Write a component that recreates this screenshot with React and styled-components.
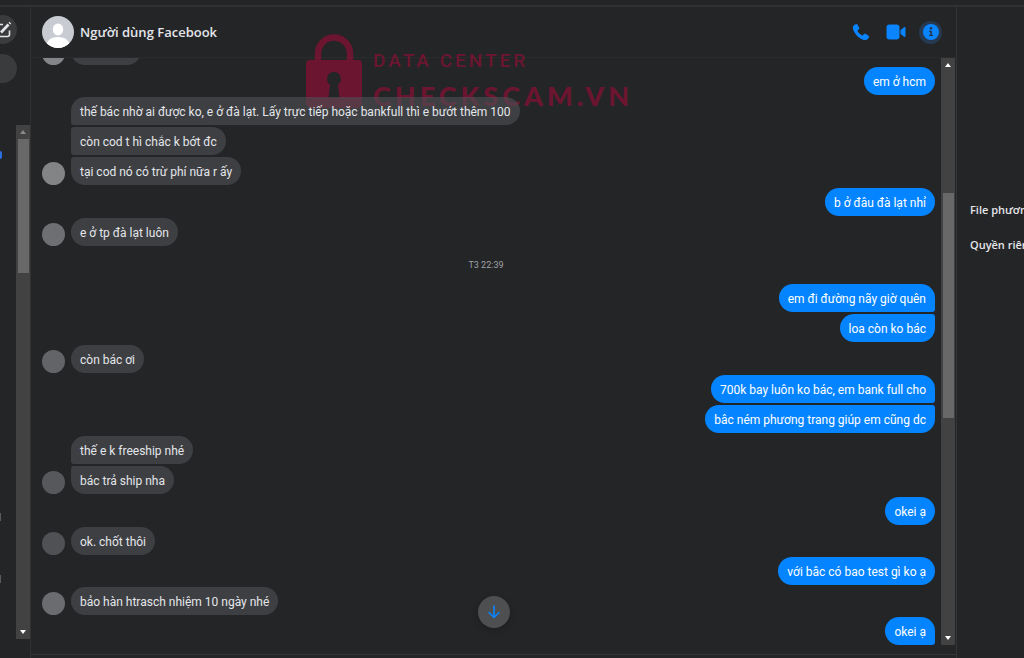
import React from 'react';
import styled, { createGlobalStyle, css } from 'styled-components';

const GlobalStyle = createGlobalStyle`
  * {
    box-sizing: border-box;
  }
  body {
    margin: 0;
    background: #242526;
    color: #e4e6eb;
    font-family: 'Open Sans', 'Noto Sans', sans-serif;
    font-size: 12px;
  }
  button {
    border: 0;
    padding: 0;
    background: none;
    color: inherit;
    font: inherit;
    cursor: pointer;
  }
`;

const Page = styled.div`
  display: flex;
  flex-direction: column;
  height: 100vh;
  overflow: hidden;
`;

const TopStrip = styled.div`
  flex: none;
  height: 7px;
  border-bottom: 2px solid #303132;
`;

const Columns = styled.div`
  display: flex;
  flex: 1;
  min-height: 0;
`;

/* left column */
const Sidebar = styled.aside`
  display: flex;
  flex-direction: column;
  flex: none;
  width: 31px;
  overflow: hidden;
  border-right: 1px solid #303132;
`;

const SidebarTools = styled.div`
  display: flex;
  flex-direction: column;
  align-items: flex-end;
  gap: 10px;
  height: 118px;
  padding: 8px 13px 0 0;
`;

const ComposeButton = styled.button`
  display: flex;
  align-items: center;
  justify-content: center;
  flex: none;
  width: 29px;
  height: 29px;
  border-radius: 50%;
  background: #3a3b3c;
`;

const SearchInput = styled.input`
  flex: none;
  width: 240px;
  height: 29px;
  border: 0;
  border-radius: 15px;
  background: #3a3b3c;
`;

const ThreadArea = styled.div`
  display: flex;
  flex: 1;
  justify-content: flex-end;
  min-height: 0;
  margin-bottom: 19px;
`;

const ThreadList = styled.div`
  display: flex;
  flex: 1;
  flex-direction: column;
  align-items: flex-start;
  padding-top: 26px;
`;

const UnreadDot = styled.span`
  width: 2px;
  height: 8px;
  border-radius: 0 4px 4px 0;
  background: #2d6fe0;
`;

const ThreadMark = styled.span`
  width: 1px;
  height: 8px;
  margin-top: ${({ $gap }) => $gap}px;
  background: #58595b;
`;

/* scroll bars */
const Track = styled.div`
  display: flex;
  flex-direction: column;
  flex: none;
  align-items: center;
  width: 14px;
  background: #424242;
`;

const TrackButton = styled.button`
  display: flex;
  align-items: center;
  justify-content: center;
  flex: none;
  width: 14px;
  height: 14px;
  color: ${({ $muted }) => ($muted ? '#8a8a8a' : '#fff')};
`;

const TrackSpace = styled.div`
  flex: ${({ $share }) => $share} 0 0;
`;

const Thumb = styled.div`
  flex: ${({ $share }) => $share} 0 0;
  width: 11px;
  background: #686868;
`;

/* conversation */
const Chat = styled.main`
  position: relative;
  display: flex;
  flex: 1;
  flex-direction: column;
  min-width: 0;
`;

const ChatHeader = styled.header`
  display: flex;
  align-items: center;
  flex: none;
  height: 51px;
  padding: 0 14px 0 11px;
  border-bottom: 1px solid #2a2b2c;
`;

const Title = styled.h1`
  flex: 1;
  margin: 0 0 0 6px;
  font-size: 13px;
  font-weight: 600;
  line-height: 20px;
`;

const Actions = styled.div`
  display: flex;
  gap: 12px;
`;

const ActionButton = styled.button`
  display: flex;
  align-items: center;
  justify-content: center;
  width: 23px;
  height: 23px;
  border-radius: 50%;
  background: ${({ $active }) => ($active ? '#263951' : 'transparent')};
  color: #0a84ff;
`;

const ChatBody = styled.div`
  display: flex;
  flex: 1;
  min-height: 0;
  padding-right: 1px;
`;

const Messages = styled.div`
  position: relative;
  z-index: 1;
  display: flex;
  flex: 1;
  flex-direction: column;
  justify-content: flex-end;
  gap: 2px;
  min-width: 0;
  overflow: hidden;
  padding: 0 6px 0 11px;
`;

const Group = styled.section`
  display: flex;
  flex: none;
  align-items: flex-end;
  gap: 6px;
  justify-content: ${({ $own }) => ($own ? 'flex-end' : 'flex-start')};
  margin-bottom: ${({ $many }) => ($many ? '1px' : '0')};
`;

const Avatar = styled.span`
  flex: none;
  width: 23px;
  height: 23px;
  border-radius: 50%;
  background: ${({ $tone }) => $tone};
`;

const Stack = styled.div`
  display: flex;
  flex-direction: column;
  align-items: ${({ $own }) => ($own ? 'flex-end' : 'flex-start')};
  gap: 2px;
`;

const ownShape = css`
  background: #0584ff;
  color: #fff;
  border-top-right-radius: ${({ $joinTop }) => ($joinTop ? '3px' : '14px')};
  border-bottom-right-radius: ${({ $joinBottom }) => ($joinBottom ? '3px' : '14px')};
`;

const otherShape = css`
  background: rgba(79, 82, 85, 0.6);
  border-top-left-radius: ${({ $joinTop }) => ($joinTop ? '3px' : '14px')};
  border-bottom-left-radius: ${({ $joinBottom }) => ($joinBottom ? '3px' : '14px')};
`;

const Bubble = styled.p`
  margin: 0;
  min-width: ${({ $min }) => $min || 0}px;
  height: 28px;
  padding: 1px 9px 0;
  border-radius: 14px;
  font-family: Roboto, 'Noto Sans', sans-serif;
  line-height: 28px;
  white-space: nowrap;
  ${({ $own }) => ($own ? ownShape : otherShape)}
`;

const Time = styled.time`
  flex: none;
  height: 34px;
  padding-right: 5px;
  color: #a0a3a8;
  font-family: Roboto, 'Noto Sans', sans-serif;
  font-size: 9px;
  line-height: 34px;
  text-align: center;
`;

const ScrollDown = styled.button`
  position: absolute;
  z-index: 2;
  bottom: 30px;
  left: 50%;
  display: flex;
  align-items: center;
  justify-content: center;
  width: 32px;
  height: 32px;
  margin-left: -16px;
  border-radius: 50%;
  background: #4e4f50;
  box-shadow: 0 2px 6px rgba(0, 0, 0, 0.2);
  color: #0a84ff;
`;

const ChatFooter = styled.footer`
  flex: none;
  height: 13px;
  padding-top: 9px;

  &::before {
    content: '';
    display: block;
    border-top: 1px solid #343536;
  }
`;

/* right column */
const Details = styled.aside`
  display: flex;
  flex-direction: column;
  flex: none;
  align-items: flex-start;
  gap: 15px;
  width: 68px;
  overflow: hidden;
  padding: 193px 0 0 13px;
  border-left: 1px solid #343536;
`;

const DetailsButton = styled.button`
  flex: none;
  font-size: 11px;
  font-weight: 600;
  line-height: 20px;
  white-space: nowrap;
`;

/* stamp behind the messages */
const Stamp = styled.div`
  position: absolute;
  top: 26px;
  left: 275px;
  display: flex;
  gap: 11px;
  opacity: 0.6;
  color: #9c0c38;
  pointer-events: none;
`;

const StampText = styled.div`
  padding-top: 15px;
  font-family: Lato, sans-serif;
  white-space: nowrap;
`;

const StampSmall = styled.div`
  font-family: Roboto, sans-serif;
  font-size: 19px;
  font-weight: 500;
  letter-spacing: 3px;
  line-height: 26px;
`;

const StampLarge = styled.div`
  font-size: 27px;
  font-weight: 900;
  letter-spacing: 4px;
  line-height: 44px;
`;

const conversation = [
  { tone: '#848588', messages: [''] },
  { own: true, messages: ['em ở hcm'] },
  {
    tone: '#838486',
    messages: [
      'thế bác nhờ ai được ko, e ở đà lạt. Lấy trực tiếp hoặc bankfull thì e bướt thêm 100',
      'còn cod t hì chắc k bớt đc',
      'tại cod nó có trừ phí nữa r ấy',
    ],
  },
  { own: true, messages: ['b ở đâu đà lạt nhỉ'] },
  { tone: '#6e6f72', messages: ['e ở tp đà lạt luôn'] },
  { time: 'T3 22:39' },
  { own: true, messages: ['em đi đường nãy giờ quên', 'loa còn ko bác'] },
  { tone: '#636467', messages: ['còn bác ơi'] },
  { own: true, messages: ['700k bay luôn ko bác, em bank full cho', 'bâc ném phương trang giúp em cũng dc'] },
  { tone: '#57585b', messages: ['thế e k freeship nhé', 'bác trả ship nha'] },
  { own: true, messages: ['okei ạ'] },
  { tone: '#505154', messages: ['ok. chốt thôi'] },
  { own: true, messages: ['với bâc có bao test gì ko ạ'] },
  { tone: '#6b6c6f', messages: ['bảo hàn htrasch nhiệm 10 ngày nhé'] },
  { own: true, continues: true, messages: ['okei ạ'] },
];

const Arrow = ({ up }) => (
  <svg width="6" height="4" viewBox="0 0 6 4" aria-hidden="true">
    <path d={up ? 'M3 0 6 4H0z' : 'M0 0h6L3 4z'} fill="currentColor" />
  </svg>
);

const ScrollBar = ({ before, thumb, after, muted }) => (
  <Track>
    <TrackButton $muted={muted} aria-label="Cuộn lên"><Arrow up /></TrackButton>
    <TrackSpace $share={before} />
    <Thumb $share={thumb} />
    <TrackSpace $share={after} />
    <TrackButton aria-label="Cuộn xuống"><Arrow /></TrackButton>
  </Track>
);

const ProfilePicture = () => (
  <svg width="32" height="32" viewBox="0 0 32 32" aria-hidden="true">
    <defs>
      <clipPath id="profile">
        <circle cx="16" cy="16" r="16" />
      </clipPath>
    </defs>
    <g clipPath="url(#profile)">
      <rect width="32" height="32" fill="#c8cbd1" />
      <ellipse cx="16" cy="13.5" rx="5.2" ry="6" fill="#fff" />
      <path d="M4 32c0-7.500 4.500-11 12-11s12 3.500 12 11z" fill="#fff" />
    </g>
  </svg>
);

const ComposeIcon = () => (
  <svg width="18" height="18" viewBox="0 0 18 18" fill="none" stroke="#e4e6eb" aria-hidden="true">
    <path d="M9 3.500H4.500a2 2 0 0 0-2 2v8a2 2 0 0 0 2 2h9a2 2 0 0 0 2-2V9.500" strokeWidth="1.600" />
    <path d="M7 11.500 14.500 3.500" strokeWidth="2.600" />
    <path d="M15.400 2.600l.9-.9" strokeWidth="2.600" />
  </svg>
);

const PhoneIcon = () => (
  <svg width="18" height="18" viewBox="0 0 18 18" aria-hidden="true">
    <path
      d="M3.600 1.200 1.900 2.300C.6 3.200.5 5.400 1.600 7.700c1.800 3.900 4.900 7 8.800 8.700 2.300 1 4.500.9 5.400-.3l1.100-1.700c.4-.6.2-1.300-.4-1.700l-3-1.900c-.5-.3-1.100-.2-1.500.2l-1.200 1.200c-.3.3-.7.3-1 .1-1.700-1-3.100-2.400-4.100-4.100-.2-.3-.1-.7.1-1L7 6c.4-.4.5-1 .2-1.500L5.300 1.600c-.4-.6-1.100-.8-1.700-.4z"
      fill="currentColor"
    />
  </svg>
);

const VideoIcon = () => (
  <svg width="20" height="16" viewBox="0 0 20 16" aria-hidden="true">
    <rect x="0.500" y="0.500" width="13" height="15" rx="3" fill="currentColor" />
    <path d="M14.500 6.200 18 3.200c.6-.5 1.500-.1 1.500.7v8.200c0 .8-.9 1.200-1.500.7l-3.500-3z" fill="currentColor" />
  </svg>
);

const InfoIcon = () => (
  <svg width="16" height="16" viewBox="0 0 16 16" aria-hidden="true">
    <circle cx="8" cy="8" r="8" fill="currentColor" />
    <circle cx="8" cy="4.300" r="1.200" fill="#242f40" />
    <path d="M6.200 6.700h2.600v4.200h1.200v1.200H6v-1.200h1.300V7.900H6.200z" fill="#242f40" />
  </svg>
);

const DownIcon = () => (
  <svg width="14" height="14" viewBox="0 0 14 14" fill="none" stroke="currentColor" strokeWidth="1.600" aria-hidden="true">
    <path d="M7 1v11M2 7.500l5 5 5-5" strokeLinecap="round" strokeLinejoin="round" />
  </svg>
);

const LockIcon = () => (
  <svg width="56" height="76" viewBox="0 0 56 76" aria-hidden="true">
    <path d="M12 27V20.500a16 16 0 0 1 32 0V27" fill="none" stroke="currentColor" strokeWidth="6.500" />
    <path
      fillRule="evenodd"
      d="M4 27h48a4 4 0 0 1 4 4v39a5 5 0 0 1-5 5H5a5 5 0 0 1-5-5V31a4 4 0 0 1 4-4zm24 12a7 7 0 0 0-4 12.700L22.500 65h11L32 51.700A7 7 0 0 0 28 39z"
      fill="currentColor"
    />
  </svg>
);

const MessageGroup = ({ own, tone, continues, messages }) => {
  const last = messages.length - 1;
  return (
    <Group $own={own} $many={last > 0}>
      {!own && <Avatar $tone={tone} />}
      <Stack $own={own}>
        {messages.map((text, i) => (
          <Bubble
            key={i}
            $own={own}
            $min={text ? 0 : 70}
            $joinTop={i > 0}
            $joinBottom={i < last || continues}
          >
            {text}
          </Bubble>
        ))}
      </Stack>
    </Group>
  );
};

const App = () => {
  return (
    <>
      <GlobalStyle />
      <Page>
        <TopStrip />
        <Columns>
          <Sidebar>
            <SidebarTools>
              <ComposeButton aria-label="Tin nhắn mới"><ComposeIcon /></ComposeButton>
              <SearchInput type="search" aria-label="Tìm kiếm" />
            </SidebarTools>
            <ThreadArea>
              <ThreadList>
                <UnreadDot />
                <ThreadMark $gap={354} />
                <ThreadMark $gap={54} />
              </ThreadList>
              <ScrollBar before={0} thumb={134} after={352} muted />
            </ThreadArea>
          </Sidebar>

          <Chat>
            <ChatHeader>
              <ProfilePicture />
              <Title>Người dùng Facebook</Title>
              <Actions>
                <ActionButton aria-label="Gọi thoại"><PhoneIcon /></ActionButton>
                <ActionButton aria-label="Gọi video"><VideoIcon /></ActionButton>
                <ActionButton $active aria-label="Thông tin"><InfoIcon /></ActionButton>
              </Actions>
            </ChatHeader>
            <Stamp>
              <LockIcon />
              <StampText>
                <StampSmall>DATA CENTER</StampSmall>
                <StampLarge>CHECKSCAM.VN</StampLarge>
              </StampText>
            </Stamp>
            <ChatBody>
              <Messages>
                {conversation.map((item, i) =>
                  item.time ? <Time key={i}>{item.time}</Time> : <MessageGroup key={i} {...item} />
                )}
              </Messages>
              <ScrollBar before={121} thumb={225} after={213} />
            </ChatBody>
            <ChatFooter />
            <ScrollDown aria-label="Xuống cuối"><DownIcon /></ScrollDown>
          </Chat>

          <Details>
            <DetailsButton>File phương tiện</DetailsButton>
            <DetailsButton>Quyền riêng tư</DetailsButton>
          </Details>
        </Columns>
      </Page>
    </>
  );
};

export default App;
